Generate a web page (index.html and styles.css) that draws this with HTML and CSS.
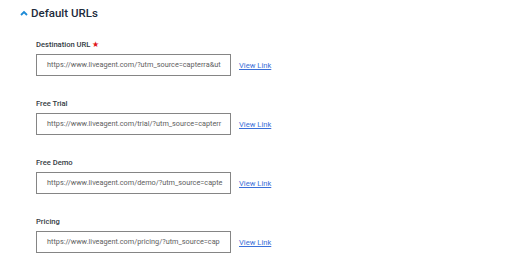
FILE: index.html
```html
<!DOCTYPE html>
<html>
<head>
<meta charset="utf-8">
<link rel="stylesheet" href="styles.css">
</head>
<body>
<div class="page">
  <div class="section-head">
    <svg class="chev" width="8" height="6" viewBox="0 0 8 6"><path d="M1 5 L4 2 L7 5" fill="none" stroke="#1c8ad6" stroke-width="1.8"/></svg>
    <span class="title">Default URLs</span>
  </div>
  <div class="fields">
    <div class="field">
      <div class="label">Destination URL <span class="req">&#9733;</span></div>
      <div class="row">
        <div class="input">https://www.liveagent.com/?utm_source=capterra&amp;ut</div>
        <a class="link" href="#">View Link</a>
      </div>
    </div>
    <div class="field">
      <div class="label">Free Trial</div>
      <div class="row">
        <div class="input">https://www.liveagent.com/trial/?utm_source=capterr</div>
        <a class="link" href="#">View Link</a>
      </div>
    </div>
    <div class="field">
      <div class="label">Free Demo</div>
      <div class="row">
        <div class="input">https://www.liveagent.com/demo/?utm_source=capte</div>
        <a class="link" href="#">View Link</a>
      </div>
    </div>
    <div class="field">
      <div class="label">Pricing</div>
      <div class="row">
        <div class="input">https://www.liveagent.com/pricing/?utm_source=cap</div>
        <a class="link" href="#">View Link</a>
      </div>
    </div>
  </div>
</div>
</body>
</html>
```
FILE: styles.css
```css
html, body { margin: 0; padding: 0; background: #fff; }
body { font-family: Roboto, "Liberation Sans", sans-serif; }
.page { padding: 6px 0 0 20px; }
.section-head { display: flex; align-items: center; gap: 3px; height: 14px; }
.chev { display: block; }
.title { font-size: 11.5px; font-weight: 500; color: #1d2b3c; }
.fields { padding-left: 16px; padding-top: 20px; display: flex; flex-direction: column; gap: 23px; }
.field { display: flex; flex-direction: column; gap: 4px; }
.label { font-size: 7.6px; font-weight: 500; color: #333b44; height: 10px; line-height: 10px; display: flex; align-items: center; gap: 2px; }
.req { color: #e0161b; font-size: 8px; }
.row { display: flex; align-items: center; gap: 8px; }
.input { box-sizing: border-box; width: 195px; height: 22px; border: 1px solid #858585; padding: 0 0 0 10px; font-size: 7.3px; color: #5e5e5e; line-height: 20px; white-space: nowrap; overflow: hidden; }
.link { font-size: 7.6px; color: #3a6fd8; text-decoration: underline; }
```
